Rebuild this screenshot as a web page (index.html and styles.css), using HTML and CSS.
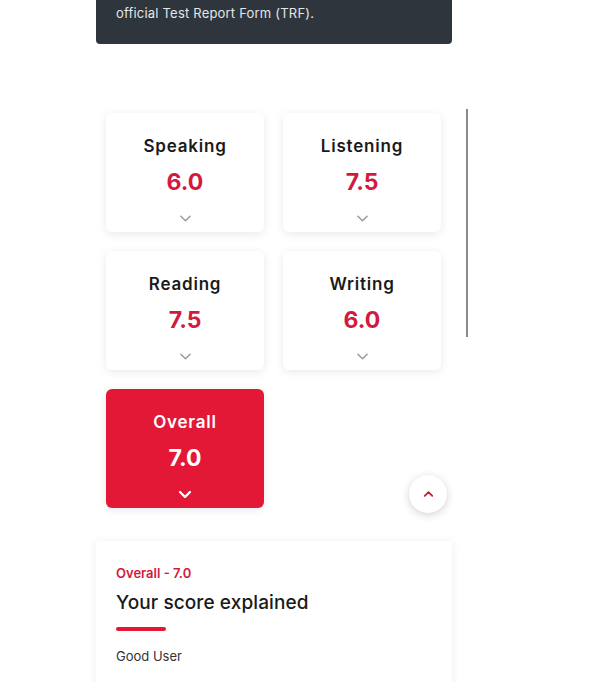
FILE: index.html
```html
<!DOCTYPE html>
<html lang="en">
<head>
  <meta charset="UTF-8">
  <title>Your IELTS results</title>
  <link rel="stylesheet" href="styles.css">
</head>
<body>
  <div class="page">
    <div class="notice">
      official Test Report Form (TRF).
    </div>

    <div class="scores">
      <div class="score-card">
        <div class="skill">Speaking</div>
        <div class="band">6.0</div>
        <svg class="chevron" viewBox="0 0 12 7"><path d="M1 1l5 5 5-5"/></svg>
      </div>
      <div class="score-card">
        <div class="skill">Listening</div>
        <div class="band">7.5</div>
        <svg class="chevron" viewBox="0 0 12 7"><path d="M1 1l5 5 5-5"/></svg>
      </div>
      <div class="score-card">
        <div class="skill">Reading</div>
        <div class="band">7.5</div>
        <svg class="chevron" viewBox="0 0 12 7"><path d="M1 1l5 5 5-5"/></svg>
      </div>
      <div class="score-card">
        <div class="skill">Writing</div>
        <div class="band">6.0</div>
        <svg class="chevron" viewBox="0 0 12 7"><path d="M1 1l5 5 5-5"/></svg>
      </div>
      <div class="score-card overall">
        <div class="skill">Overall</div>
        <div class="band">7.0</div>
        <svg class="chevron" viewBox="0 0 12 7"><path d="M1 1l5 5 5-5"/></svg>
      </div>

      <div class="scrollbar"></div>
      <button class="to-top" aria-label="Back to top">
        <svg viewBox="0 0 12 7"><path d="M1 6l5-5 5 5"/></svg>
      </button>
    </div>

    <div class="explain">
      <div class="explain-label">Overall - 7.0</div>
      <h3>Your score explained</h3>
      <div class="rule"></div>
      <p>Good User</p>
    </div>
  </div>
</body>
</html>
```

FILE: styles.css
```css
body {
  margin: 0;
  background: #ffffff;
  font-family: Inter, "Open Sans", sans-serif;
  color: #1a1a1a;
}
.page {
  width: 356px;
  margin-left: 96px;
}
.notice {
  background-color: #2e353c;
  color: #e4e6e8;
  font-size: 13px;
  line-height: 18px;
  letter-spacing: 0.2px;
  padding: 4px 20px 22px;
  border-radius: 0 0 4px 4px;
}
.scores {
  position: relative;
  display: grid;
  grid-template-columns: 158px 158px;
  gap: 19px;
  padding: 0 10px;
  margin-top: 69px;
}
.score-card {
  height: 119px;
  background: #ffffff;
  border-radius: 6px;
  box-shadow: 0 2px 10px rgba(0,0,0,0.09);
  display: flex;
  flex-direction: column;
  align-items: center;
  box-sizing: border-box;
  padding-top: 22px;
}
.skill {
  font-size: 17px;
  font-weight: 600;
  line-height: 22px;
  letter-spacing: 0.8px;
}
.band {
  font-size: 23px;
  font-weight: 700;
  line-height: 28px;
  margin-top: 11px;
  color: #d31a3e;
}
.chevron {
  width: 11px;
  height: 7px;
  margin-top: 19px;
  fill: none;
  stroke: #9a9a9a;
  stroke-width: 1.6;
  stroke-linecap: round;
  stroke-linejoin: round;
}
.overall {
  background-color: #e31837;
  color: #ffffff;
}
.overall .band {
  color: #ffffff;
}
.overall .chevron {
  width: 12px;
  stroke: #ffffff;
  stroke-width: 2.4;
}
.scrollbar {
  position: absolute;
  left: 370px;
  top: -4px;
  width: 2px;
  height: 228px;
  background: #8a8a8a;
}
.to-top {
  position: absolute;
  left: 313px;
  top: 362px;
  width: 38px;
  height: 38px;
  border-radius: 50%;
  border: none;
  background: #ffffff;
  box-shadow: 0 2px 8px rgba(0,0,0,0.18);
  padding: 0;
  display: flex;
  align-items: center;
  justify-content: center;
}
.to-top svg {
  width: 9px;
  height: 6px;
  fill: none;
  stroke: #c41a3c;
  stroke-width: 2.4;
  stroke-linecap: round;
  stroke-linejoin: round;
}
.explain {
  margin-top: 33px;
  background: #ffffff;
  box-shadow: 0 1px 10px rgba(0,0,0,0.07);
  border-radius: 4px;
  padding: 23px 20px 30px;
}
.explain-label {
  color: #d31a3e;
  font-size: 13px;
  font-weight: 600;
  line-height: 18px;
}
.explain h3 {
  margin: 9px 0 0;
  font-size: 19px;
  font-weight: 500;
  line-height: 24px;
  letter-spacing: 0.1px;
}
.rule {
  width: 50px;
  height: 4px;
  border-radius: 2px;
  background: #e31837;
  margin-top: 12px;
}
.explain p {
  margin: 16px 0 0;
  font-size: 13px;
  line-height: 18px;
  color: #333333;
}
```
